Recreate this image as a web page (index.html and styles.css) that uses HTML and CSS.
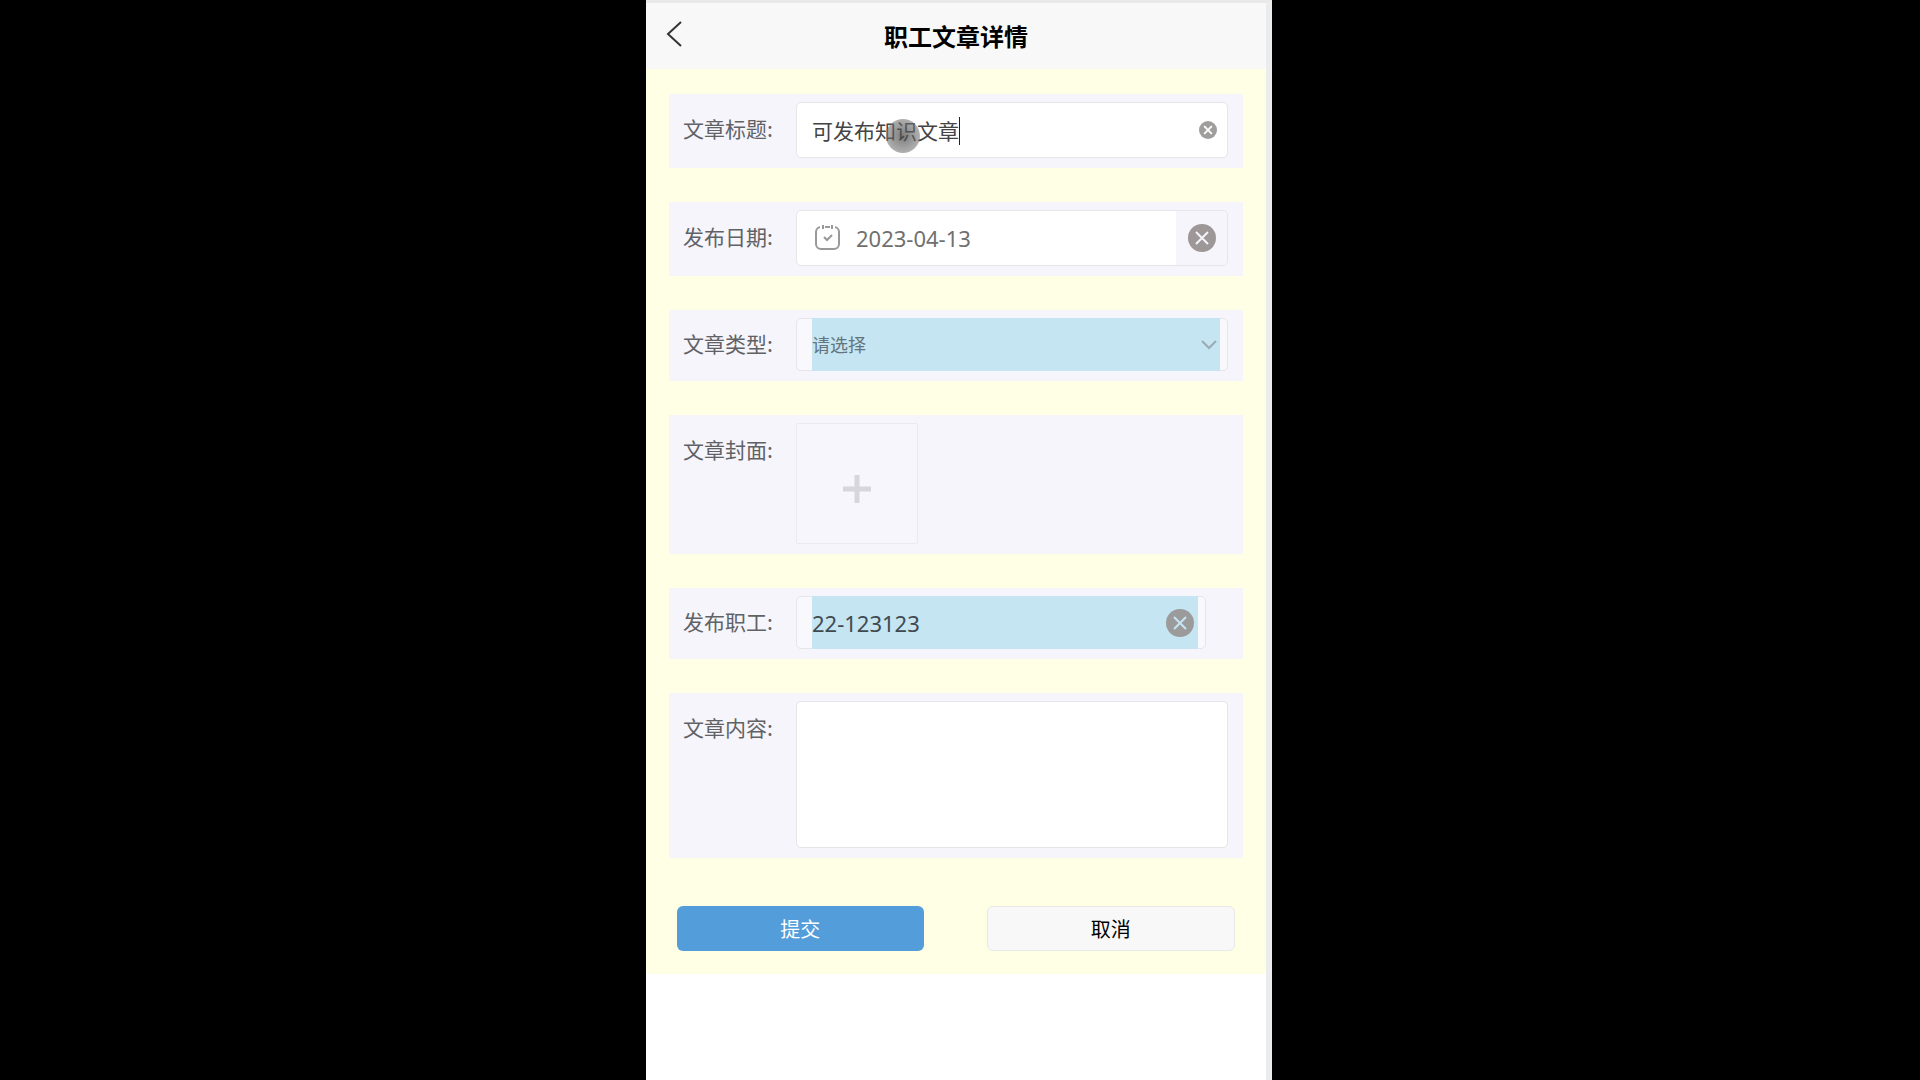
FILE: index.html
```html
<!DOCTYPE html>
<html lang="zh-CN">
<head>
    <meta charset="UTF-8">
    <meta name="viewport" content="width=device-width, initial-scale=1">
    <title>职工文章详情</title>
    <link rel="stylesheet" href="styles.css">
</head>
<body>
    <div class="phone">
        <header class="nav-bar">
            <button class="back-btn" type="button" aria-label="返回">
                <svg width="16" height="26" viewBox="0 0 16 26"><path d="M15 1 L2 13 L15 25" fill="none" stroke="#333" stroke-width="2"/></svg>
            </button>
            <h1>职工文章详情</h1>
        </header>
        <form class="article-form">
            <div class="row">
                <label for="title">文章标题:</label>
                <div class="field tall white">
                    <input id="title" type="text" value="可发布知识文章">
                    <span class="caret"></span>
                    <span class="touch-dot"></span>
                    <button class="clear-btn small" type="button" aria-label="清空标题">
                        <svg width="18" height="18" viewBox="0 0 28 28"><circle cx="14" cy="14" r="14" fill="#a09d9d"/><path d="M8 8 L20 20 M20 8 L8 20" stroke="#fff" stroke-width="3"/></svg>
                    </button>
                </div>
            </div>
            <div class="row">
                <label for="date">发布日期:</label>
                <div class="field tall white date">
                    <svg class="calendar" width="26" height="26" viewBox="0 0 26 26" fill="none" stroke="#9b9898" stroke-width="2">
                        <rect x="1" y="2" width="23" height="22" rx="5"/>
                        <path d="M5 2 H20" stroke="white"/>
                        <path d="M8 0 V4 M17 0 V4 M10 2 H15 M9 12 L12 15 L17 10"/>
                    </svg>
                    <input id="date" type="text" value="2023-04-13">
                    <button class="clear-btn date-clear" type="button" aria-label="清空日期">
                        <svg width="28" height="28" viewBox="0 0 28 28"><circle cx="14" cy="14" r="14" fill="#9e9798"/><path d="M8 8 L20 20 M20 8 L8 20" stroke="#f5f4f9" stroke-width="2"/></svg>
                    </button>
                </div>
            </div>
            <div class="row">
                <label for="type">文章类型:</label>
                <div class="field">
                    <div class="picker">
                        <select id="type">
                            <option>请选择</option>
                        </select>
                        <svg class="arrow" width="16" height="10" viewBox="0 0 16 10"><path d="M1 1 L8 8 L15 1" fill="none" stroke="#9aabb3" stroke-width="2"/></svg>
                    </div>
                </div>
            </div>
            <div class="row top">
                <label for="cover">文章封面:</label>
                <button class="upload" id="cover" type="button" aria-label="上传封面">
                    <svg width="28" height="28" viewBox="0 0 28 28"><path d="M14 0 V28 M0 14 H28" stroke="#d7d6dc" stroke-width="5"/></svg>
                </button>
            </div>
            <div class="row">
                <label for="staff">发布职工:</label>
                <div class="field staff">
                    <div class="picker">
                        <input id="staff" type="text" value="22-123123">
                        <button class="clear-btn" type="button" aria-label="清空职工">
                            <svg width="28" height="28" viewBox="0 0 28 28"><circle cx="14" cy="14" r="14" fill="#9c9b9c"/><path d="M8 8 L20 20 M20 8 L8 20" stroke="#c5e5f3" stroke-width="2"/></svg>
                        </button>
                    </div>
                </div>
            </div>
            <div class="row top">
                <label for="content">文章内容:</label>
                <textarea id="content"></textarea>
            </div>
            <div class="actions">
                <button class="submit-btn" type="button">提交</button>
                <button class="cancel-btn" type="button">取消</button>
            </div>
        </form>
    </div>
</body>
</html>
```
FILE: styles.css
```css
* {
    box-sizing: border-box;
}

body {
    margin: 0;
    background-color: black;
    padding-right: 2px;
    font-family: "Noto Sans", "Noto Sans CJK SC", sans-serif;
}

button, input, select, textarea {
    font-family: inherit;
    margin: 0;
    padding: 0;
    border: none;
    background: none;
    outline: none;
}

svg {
    display: block;
}

.phone {
    max-width: 626px;
    min-height: 100vh;
    margin: 0 auto;
    background-color: white;
    border-top: 3px solid #e9e9e9;
    border-right: 6px solid #ebecee;
}

.nav-bar {
    position: relative;
    height: 66px;
    background-color: #f8f8f8;
    display: flex;
    align-items: center;
    justify-content: center;
}

.nav-bar h1 {
    margin: 0;
    font-family: "Noto Sans CJK SC", sans-serif;
    font-size: 24px;
    line-height: 36px;
    color: black;
}

.back-btn {
    position: absolute;
    left: 20px;
    top: 18px;
}

.article-form {
    background-color: #ffffe5;
    padding: 25px 23px 23px;
    display: flex;
    flex-direction: column;
    gap: 34px;
}

.row {
    display: flex;
    align-items: center;
    background-color: #f6f5fb;
    padding: 8px 15px 10px 14px;
}

.row.top {
    align-items: flex-start;
}

.row label {
    flex: 0 0 113px;
    font-family: "Noto Sans CJK SC", sans-serif;
    font-size: 21px;
    line-height: 32px;
    padding-bottom: 4px;
    color: #606266;
}

.row.top label {
    padding-top: 10px;
}

.field {
    position: relative;
    flex: 1;
    min-width: 0;
    height: 53px;
    display: flex;
    align-items: center;
    border: 1px solid #e5e5ea;
    border-radius: 5px;
    padding: 0 7px 0 15px;
    background-color: #f9f8fd;
}

.field.tall {
    height: 56px;
}

.field.white {
    background-color: white;
}

.field input {
    flex: 1;
    min-width: 0;
    height: 100%;
    font-size: 21px;
    color: #444;
}

.field.date {
    padding: 0 0 0 18px;
}

.field.date input {
    margin-left: 15px;
    font-size: 22px;
    color: #707070;
}

.date-clear {
    width: 51px;
    height: 100%;
    background-color: #f6f5fb;
    border-radius: 0 5px 5px 0;
    display: flex;
    align-items: center;
    justify-content: center;
}

.clear-btn.small {
    margin-right: 3px;
}

.caret {
    position: absolute;
    left: 162px;
    top: 14px;
    width: 1px;
    height: 28px;
    background-color: #222;
}

.touch-dot {
    position: absolute;
    left: 89px;
    top: 16px;
    width: 34px;
    height: 34px;
    border-radius: 50%;
    background: radial-gradient(circle, rgba(70, 70, 70, 0.7) 0%, rgba(110, 110, 110, 0.6) 60%, rgba(150, 150, 150, 0.5) 100%);
}

.picker {
    position: relative;
    flex: 1;
    min-width: 0;
    height: 53px;
    display: flex;
    align-items: center;
    padding-right: 4px;
    background-color: #c5e5f3;
}

.picker select {
    flex: 1;
    height: 100%;
    appearance: none;
    font-size: 18px;
    color: #63747c;
}

.picker input {
    font-size: 22px;
    color: #3f4a50;
}

.arrow {
    position: absolute;
    right: 3px;
    top: 22px;
    pointer-events: none;
}

.field.staff {
    margin-right: 22px;
}

.upload {
    flex: 0 0 122px;
    height: 121px;
    border: 1px solid #ebebef;
    border-radius: 2px;
    background-color: #f7f6fc;
    display: flex;
    align-items: center;
    justify-content: center;
}

.upload svg {
    margin-top: 10px;
}

textarea {
    flex: 1;
    min-width: 0;
    height: 147px;
    resize: none;
    border: 1px solid #e5e5ea;
    border-radius: 5px;
    background-color: white;
    padding: 10px 15px;
    font-size: 21px;
}

.actions {
    display: flex;
    gap: 63px;
    padding: 14px 8px 0;
}

.actions button {
    flex: 1;
    height: 45px;
    border-radius: 6px;
    font-family: "Noto Sans CJK SC", sans-serif;
    font-size: 20px;
}

.submit-btn {
    background-color: #549ddb;
    color: white;
}

.actions .cancel-btn {
    background-color: #f8f8f8;
    border: 1px solid #e6e9e6;
    color: black;
}
```
